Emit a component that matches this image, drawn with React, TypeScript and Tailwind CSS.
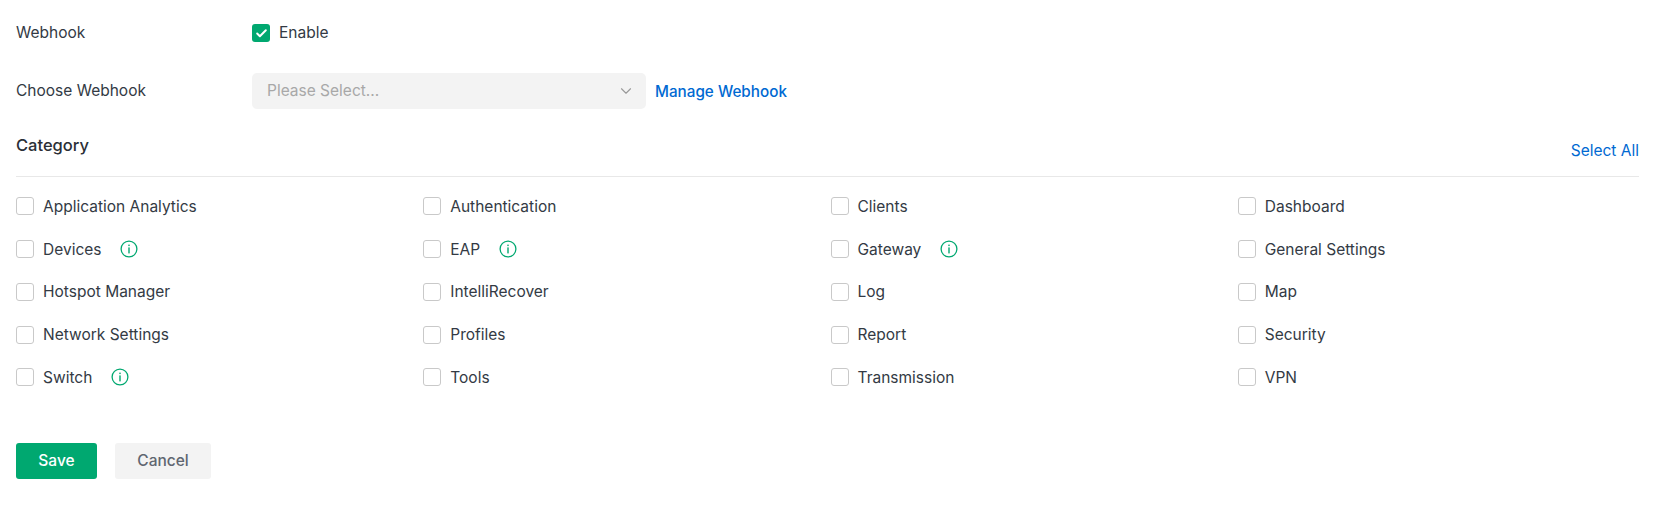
import { Check, ChevronDown } from "lucide-react";

const CATEGORIES = [
  { name: "Application Analytics" },
  { name: "Authentication" },
  { name: "Clients" },
  { name: "Dashboard" },
  { name: "Devices", info: true },
  { name: "EAP", info: true },
  { name: "Gateway", info: true },
  { name: "General Settings" },
  { name: "Hotspot Manager" },
  { name: "IntelliRecover" },
  { name: "Log" },
  { name: "Map" },
  { name: "Network Settings" },
  { name: "Profiles" },
  { name: "Report" },
  { name: "Security" },
  { name: "Switch", info: true },
  { name: "Tools" },
  { name: "Transmission" },
  { name: "VPN" },
];

function InfoIcon() {
  return (
    <svg width="18" height="18" viewBox="0 0 18 18" fill="none" className="ml-[19px] shrink-0">
      <circle cx="9" cy="9" r="7.9" stroke="#00a870" strokeWidth="1.3" />
      <rect x="8.3" y="4.6" width="1.4" height="1.5" fill="#00a870" />
      <rect x="8.3" y="7.4" width="1.4" height="6" fill="#00a870" />
    </svg>
  );
}

export default function App() {
  return (
    <div className="w-[1666px] h-[507px] bg-white pl-4 pt-6 font-['Inter',sans-serif] text-[15.5px] text-[#333a44]">
      {/* Webhook */}
      <div className="flex items-center h-[18px]">
        <div className="w-[236px]">Webhook</div>
        <div className="w-[18px] h-[18px] rounded-[3px] bg-[#00a870] flex items-center justify-center">
          <Check size={13} strokeWidth={3.6} className="text-white" />
        </div>
        <span className="ml-[9px]">Enable</span>
      </div>

      {/* Choose Webhook */}
      <div className="flex items-center h-9 mt-[31px]">
        <div className="w-[236px]">Choose Webhook</div>
        <div className="w-[394px] h-9 rounded-[5px] bg-[#f3f3f3] flex items-center justify-between pl-[15px] pr-[11px] text-[#a8a8a8]">
          <span>Please Select...</span>
          <ChevronDown size={18} strokeWidth={1.5} className="text-[#999999]" />
        </div>
        <a className="ml-[9px] mt-0.5 text-[15.25px] text-[#0069d2] font-medium">Manage Webhook</a>
      </div>

      {/* Category */}
      <div className="w-[1623px] flex justify-between border-b border-[#e8e8e8] h-[68px] pt-[25px]">
        <span className="text-[16.5px] font-medium leading-[22px] text-[#2b2f36]">Category</span>
        <a className="text-[#0069d2] mt-[6px] leading-[22px]">Select All</a>
      </div>

      <div className="w-[1629px] grid grid-cols-4 mt-2">
        {CATEGORIES.map((c) => (
          <div key={c.name} className="flex items-center h-[42.75px]">
            <span className="w-[18px] h-[18px] rounded-[3px] border border-[#c9c9c9] bg-white shrink-0" />
            <span className="ml-[9px]">{c.name}</span>
            {c.info && <InfoIcon />}
          </div>
        ))}
      </div>

      {/* Actions */}
      <div className="flex gap-[18px] mt-[44px]">
        <button className="w-[81px] h-9 rounded-[3px] bg-[#00a870] text-white font-medium">Save</button>
        <button className="w-24 h-9 rounded-[3px] bg-[#f3f3f3] text-[#5f6670] font-medium">Cancel</button>
      </div>
    </div>
  );
}
